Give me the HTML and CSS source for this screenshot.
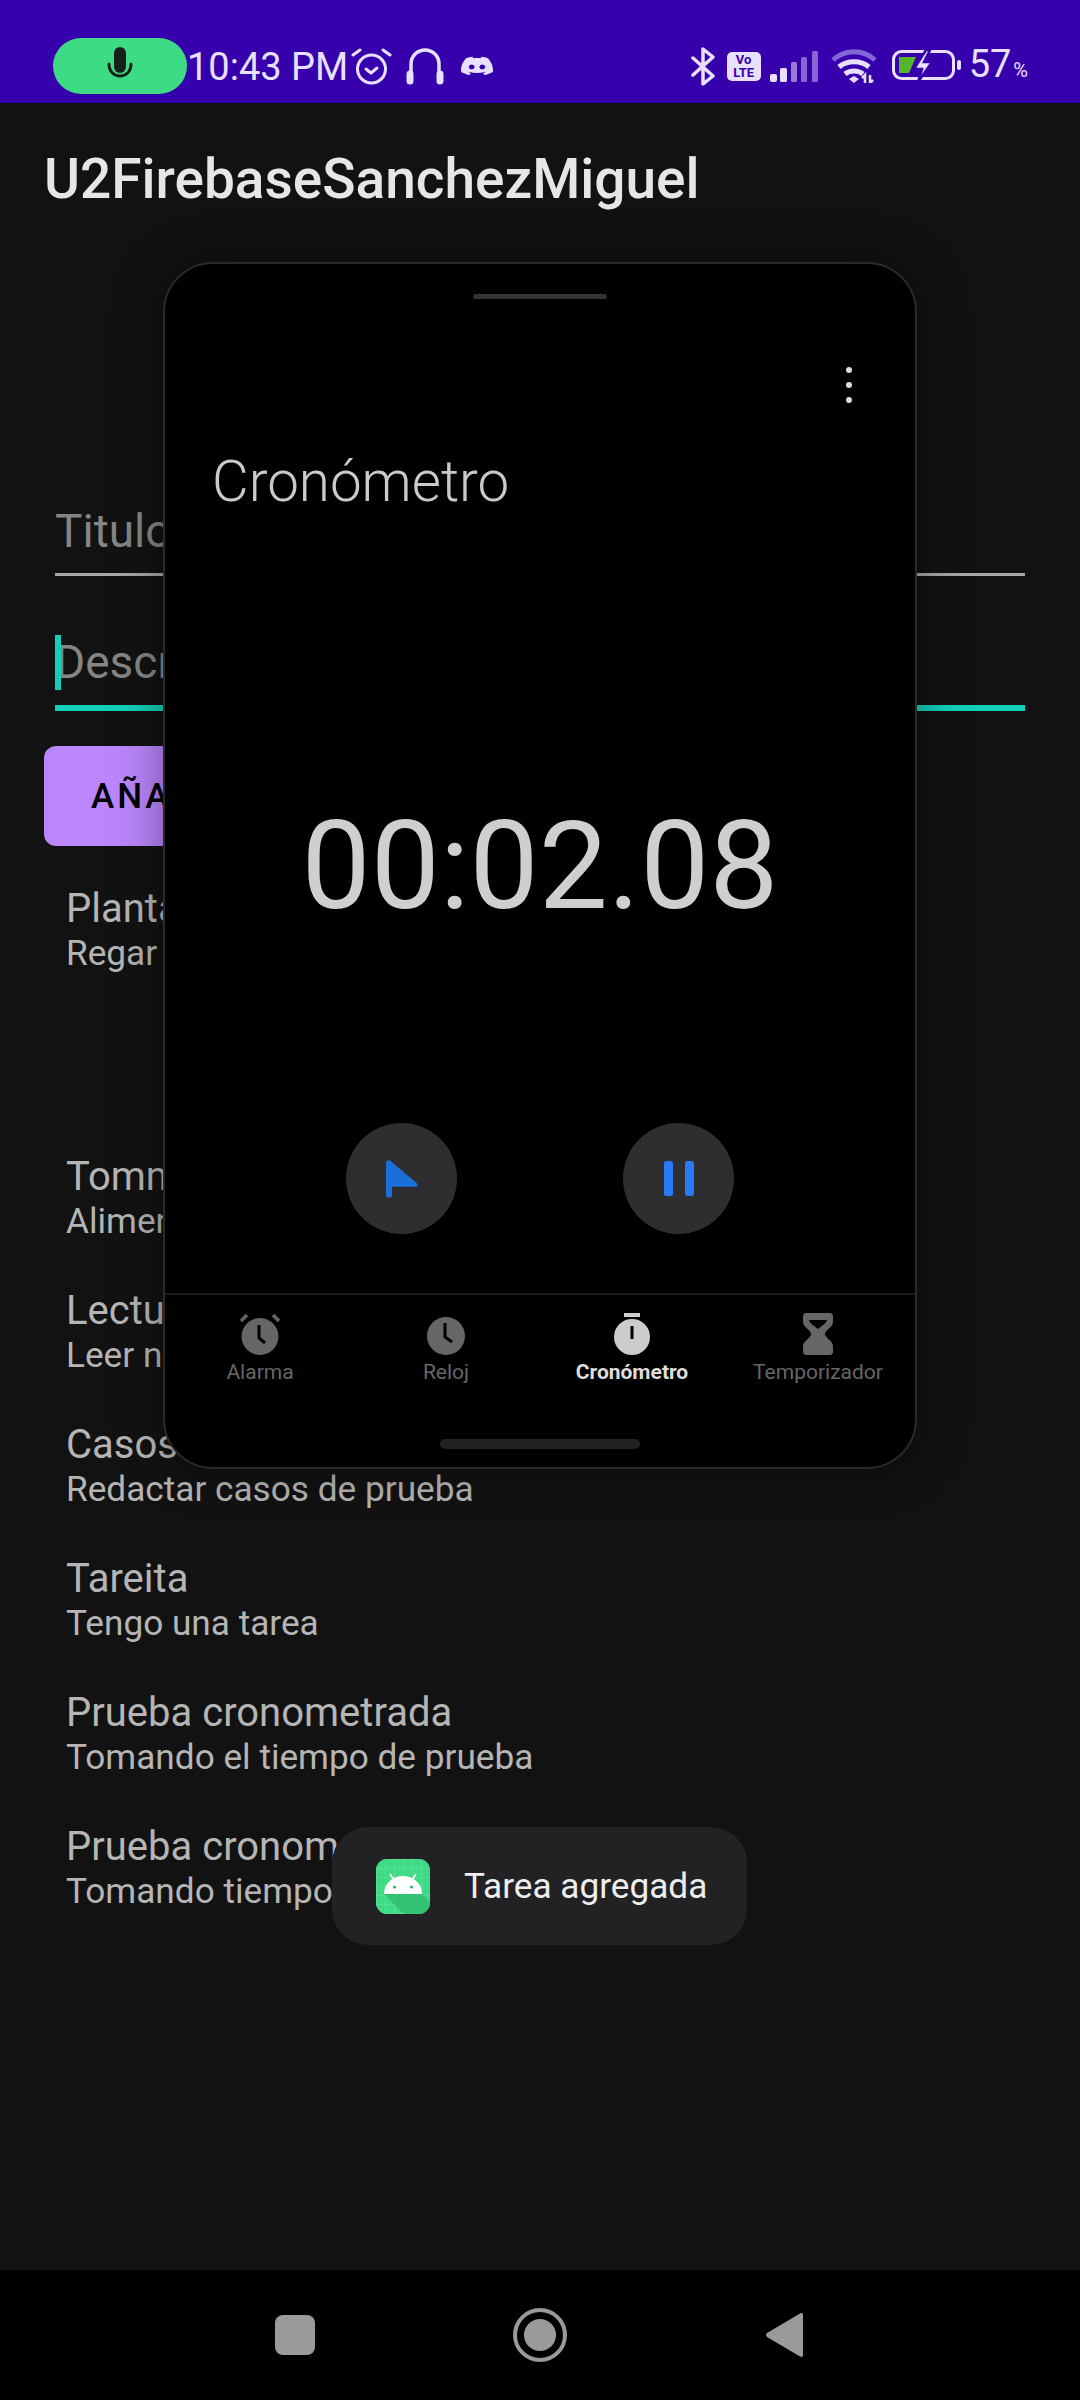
FILE: index.html
```html
<!DOCTYPE html>
<html lang="es">
<head>
    <meta charset="UTF-8">
    <title>U2FirebaseSanchezMiguel</title>
    <link rel="stylesheet" href="styles.css">
</head>
<body>

    <div class="status-bar">
        <div class="mic-pill">
            <svg width="26" height="38" viewBox="0 0 26 38">
                <rect x="7" y="0" width="12" height="26" rx="6" fill="#15201c"/>
                <path d="M2 17c0 16 22 16 22 0" fill="none" stroke="#15201c" stroke-width="3" stroke-linecap="round"/>
            </svg>
        </div>
        <span class="clock">10:43 PM</span>
        <svg class="st-alarm" width="41" height="37" viewBox="0 0 41 37" fill="none" stroke="#e9e0ff" stroke-width="3" stroke-linecap="round" stroke-linejoin="round">
            <circle cx="20.500" cy="21" r="14"/>
            <path d="M15 21l5 4 6-5"/>
            <path d="M2 7l7-5M39 7l-7-5"/>
        </svg>
        <svg class="st-head" width="38" height="37" viewBox="0 0 38 37" fill="none" stroke="#e9e0ff" stroke-linecap="round">
            <path d="M5 28V16a14 14 0 0 1 28 0V28" stroke-width="3.500"/>
            <path d="M4 26v7M34 26v7" stroke-width="7"/>
        </svg>
        <svg class="st-discord" width="32" height="24" viewBox="0 0 24 24" preserveAspectRatio="none">
            <path fill="#e9e0ff" d="M20.317 4.3698a19.7913 19.7913 0 00-4.8851-1.5152.0741.0741 0 00-.0785.0371c-.211.3753-.4447.8648-.6083 1.2495-1.8447-.2762-3.68-.2762-5.4868 0-.1636-.3933-.4058-.8742-.6177-1.2495a.077.077 0 00-.0785-.037 19.7363 19.7363 0 00-4.8852 1.515.0699.0699 0 00-.0321.0277C.5334 9.0458-.319 13.5799.0992 18.0578a.0824.0824 0 00.0312.0561c2.0528 1.5076 4.0413 2.4228 5.9929 3.0294a.0777.0777 0 00.0842-.0276c.4616-.6304.8731-1.2952 1.226-1.9942a.076.076 0 00-.0416-.1057c-.6528-.2476-1.2743-.5495-1.8722-.8923a.077.077 0 01-.0076-.1277c.1258-.0943.2517-.1923.3718-.2914a.0743.0743 0 01.0776-.0105c3.9278 1.7933 8.18 1.7933 12.0614 0a.0739.0739 0 01.0785.0095c.1202.099.246.1981.3728.2924a.077.077 0 01-.0066.1276 12.2986 12.2986 0 01-1.873.8914.0766.0766 0 00-.0407.1067c.3604.698.7719 1.3628 1.225 1.9932a.076.076 0 00.0842.0286c1.961-.6067 3.9495-1.5219 6.0023-3.0294a.077.077 0 00.0313-.0552c.5004-5.177-.8382-9.6739-3.5485-13.6604a.061.061 0 00-.0312-.0286zM8.02 15.3312c-1.1825 0-2.1569-1.0857-2.1569-2.419 0-1.3332.9555-2.4189 2.157-2.4189 1.2108 0 2.1757 1.0952 2.1568 2.419 0 1.3332-.9555 2.4189-2.1569 2.4189zm7.9748 0c-1.1825 0-2.1569-1.0857-2.1569-2.419 0-1.3332.9554-2.4189 2.1569-2.4189 1.2108 0 2.1757 1.0952 2.1568 2.419 0 1.3332-.946 2.4189-2.1568 2.4189Z"/>
        </svg>

        <div class="status-right">
            <svg class="st-bt" width="24" height="39" viewBox="0 0 24 39" fill="none" stroke="#e9e0ff" stroke-width="3.500" stroke-linejoin="round" stroke-linecap="round">
                <path d="M2 11l20 18-10 8V2l10 8L2 28"/>
            </svg>
            <div class="volte"><span>Vo</span><span>LTE</span></div>
            <svg class="st-signal" width="48" height="31" viewBox="0 0 48 31" fill="#e9e0ff">
                <rect x="0" y="23" width="7" height="8" rx="2"/>
                <rect x="10" y="17" width="7" height="14" rx="1.500"/>
                <rect x="21" y="11" width="6" height="20" rx="1.500" opacity=".55"/>
                <rect x="31" y="6" width="6" height="25" rx="1.500" opacity=".45"/>
                <rect x="42" y="0" width="6" height="31" rx="1.500" opacity=".45"/>
            </svg>
            <svg class="st-wifi" width="46" height="34" viewBox="0 0 46 34" fill="none" stroke="#e9e0ff" stroke-width="5">
                <path d="M2 11C14 0 32 0 44 11" stroke="#8467d6"/>
                <path d="M8 18c8-7 22-7 30 0"/>
                <path d="M14 25c5-4 13-4 18 0"/>
                <path d="M18 30l5-3 5 3-5 4z" fill="#e9e0ff" stroke="none"/>
                <path d="M34 34v-8l-3 3M39 26v8l3-3" stroke-width="2.500"/>
            </svg>
            <svg class="st-batt" width="69" height="32" viewBox="0 0 69 32">
                <rect x="1.500" y="1.500" width="60" height="27" rx="8" fill="none" stroke="#e9e0ff" stroke-width="3"/>
                <path d="M7 7h17l-7 16H7z" fill="#55b52a"/>
                <path d="M34 0L22 19h8l-4 13 14-20h-8l6-12z" fill="#e9e0ff" stroke="#3700ad" stroke-width="2.500"/>
                <rect x="65" y="10" width="4" height="10" rx="2" fill="#e9e0ff"/>
            </svg>
            <span class="batt-num">57<small>%</small></span>
        </div>
    </div>

    <div class="app">
        <h1 class="app-title">U2FirebaseSanchezMiguel</h1>

        <div class="campo campo-titulo">Titulo</div>
        <div class="campo campo-foco"><i class="cursor"></i>Descripcion</div>

        <button class="btn-add">AÑADIR</button>

        <ul class="tareas">
            <li class="tarea tarea-alta"><b>Plantas</b><span>Regar plantas</span></li>
            <li class="tarea"><b>Tommy</b><span>Alimentar a Tommy</span></li>
            <li class="tarea"><b>Lectura</b><span>Leer novela</span></li>
            <li class="tarea"><b>Casos de prueba</b><span>Redactar casos de prueba</span></li>
            <li class="tarea"><b>Tareita</b><span>Tengo una tarea</span></li>
            <li class="tarea"><b>Prueba cronometrada</b><span>Tomando el tiempo de prueba</span></li>
            <li class="tarea"><b>Prueba cronometrada</b><span>Tomando tiempo</span></li>
        </ul>
    </div>

    <div class="nav-bar">
        <svg width="40" height="40" viewBox="0 0 40 40"><rect width="40" height="40" rx="8" fill="#9a9a9a"/></svg>
        <svg width="54" height="54" viewBox="0 0 54 54">
            <circle cx="27" cy="27" r="25" fill="none" stroke="#9a9a9a" stroke-width="4"/>
            <circle cx="27" cy="27" r="16" fill="#9a9a9a"/>
        </svg>
        <svg width="37" height="46" viewBox="0 0 37 46"><path d="M34 1.500c1.500-1 3-.2 3 1.500v40c0 1.700-1.500 2.500-3 1.500L1 25c-1.300-1-1.300-3 0-4z" fill="#9a9a9a"/></svg>
    </div>

    <!-- ventana flotante del reloj -->
    <div class="ventana">
        <div class="handle"></div>
        <div class="menu-dots"><i></i><i></i><i></i></div>
        <h2 class="crono-titulo">Cronómetro</h2>
        <div class="crono-tiempo">00:02.08</div>

        <div class="crono-btns">
            <div class="round-btn">
                <svg width="32" height="38" viewBox="0 0 32 38"><path d="M0 3c0-2.500 2.500-3.500 4.500-2l26 22c1.800 1.500 1 3.800-1.200 3.800H6V35c0 3.500-6 3.500-6 0z" fill="#1b6fd8"/></svg>
            </div>
            <div class="round-btn">
                <svg width="30" height="35" viewBox="0 0 30 35" fill="#2979f5"><rect width="9" height="35" rx="2.500"/><rect x="21" width="9" height="35" rx="2.500"/></svg>
            </div>
        </div>

        <div class="tabs">
            <div class="tab">
                <svg width="42" height="42" viewBox="0 0 42 42">
                    <circle cx="21" cy="23.500" r="18.500" fill="#666"/>
                    <path d="M20 12v13l6 5" fill="none" stroke="#000" stroke-width="3"/>
                    <path d="M2 8l6-6M40 8l-6-6" stroke="#666" stroke-width="3.500"/>
                </svg>
                <span>Alarma</span>
            </div>
            <div class="tab">
                <svg width="42" height="42" viewBox="0 0 42 42">
                    <circle cx="21" cy="23" r="19" fill="#666"/>
                    <path d="M20 10v14l7 5" fill="none" stroke="#000" stroke-width="3"/>
                </svg>
                <span>Reloj</span>
            </div>
            <div class="tab activa">
                <svg width="42" height="42" viewBox="0 0 42 42">
                    <rect x="13" y="0" width="16" height="4" fill="#ccc"/>
                    <circle cx="21" cy="24" r="18" fill="#ccc"/>
                    <rect x="19.500" y="13" width="3" height="13" fill="#000"/>
                </svg>
                <span>Cronómetro</span>
            </div>
            <div class="tab">
                <svg width="42" height="42" viewBox="0 0 42 42">
                    <path d="M6 3c0-1.500 1.500-3 3-3h24c1.500 0 3 1.500 3 3v6c0 5-8 8-8 12s8 7 8 12v6c0 1.500-1.500 3-3 3H9c-1.500 0-3-1.500-3-3v-6c0-5 8-8 8-12S6 14 6 9z" fill="#666"/>
                    <path d="M12 7h18c-1 4-6 6-9 9-3-3-8-5-9-9z" fill="#000"/>
                </svg>
                <span>Temporizador</span>
            </div>
        </div>
        <div class="handle-bottom"></div>
    </div>

    <div class="toast">
        <svg width="54" height="55" viewBox="0 0 54 55">
            <defs>
                <pattern id="rejilla" width="9" height="9" patternUnits="userSpaceOnUse">
                    <path d="M9 0H0V9" fill="none" stroke="#7fe0ad" stroke-width=".7"/>
                </pattern>
            </defs>
            <rect width="54" height="55" rx="11" fill="#3ddc84"/>
            <rect width="54" height="55" rx="11" fill="url(#rejilla)"/>
            <path d="M8 35h38l8 8v1c0 6-5 11-11 11H28z" fill="#2fb56d" opacity=".7"/>
            <path d="M8 35c0-11 9-18 19-18s19 7 19 18z" fill="#fff"/>
            <path d="M18 21l-4-6M36 21l4-6" stroke="#fff" stroke-width="1.500"/>
            <circle cx="18.500" cy="28" r="1.600" fill="#2fb56d"/>
            <circle cx="35.500" cy="28" r="1.600" fill="#2fb56d"/>
        </svg>
        <span>Tarea agregada</span>
    </div>

</body>
</html>
```

FILE: styles.css
```css
* {
    box-sizing: border-box;
}

body {
    margin: 0;
    width: 1080px;
    height: 2400px;
    position: relative;
    overflow: hidden;
    display: flex;
    flex-direction: column;
    background-color: #121212;
    font-family: Roboto, "Liberation Sans", sans-serif;
}

/* barra de estado */
.status-bar {
    height: 103px;
    flex: none;
    display: flex;
    align-items: center;
    padding: 29px 0 0 53px;
    background-color: #3700ad;
    color: #e9e0ff;
}

.mic-pill {
    width: 134px;
    height: 56px;
    border-radius: 28px;
    background-color: #3ddc84;
    display: flex;
    align-items: center;
    justify-content: center;
}

.clock {
    margin: 2px 0 0;
    font-size: 38px;
    line-height: 56px;
}

.st-alarm {
    margin-left: 3px;
}

.st-head {
    margin-left: 14px;
}

.st-discord {
    margin-left: 17px;
}

.status-right {
    margin-left: auto;
    display: flex;
    align-items: center;
    padding-right: 52px;
}

.volte {
    width: 34px;
    height: 29px;
    margin-left: 12px;
    border-radius: 5px;
    background-color: #e9e0ff;
    color: #3700ad;
    display: flex;
    flex-direction: column;
    align-items: center;
    justify-content: center;
    font-size: 13px;
    line-height: 13px;
    font-weight: 700;
}

.st-signal {
    margin-left: 9px;
}

.st-wifi {
    margin-left: 13px;
}

.st-batt {
    margin-left: 15px;
}

.batt-num {
    margin: 2px 0 0 8px;
    font-size: 38px;
    line-height: 56px;
}

.batt-num small {
    font-size: 20px;
    margin-left: 2px;
}

/* contenido de la app */
.app {
    flex: 1;
    padding: 0 44px;
}

.app-title {
    margin: 47px 0 0;
    font-size: 55px;
    line-height: 58px;
    font-weight: 500;
    color: #e6e6e6;
}

.campo {
    position: relative;
    margin: 0 11px;
    height: 72px;
    font-size: 46px;
    color: #858585;
    border-bottom: 3px solid #a8a8a8;
}

.campo-titulo {
    margin-top: 296px;
    line-height: 54px;
}

.campo-foco {
    margin-top: 63px;
    line-height: 46px;
    border-bottom: 6px solid #12d0b8;
}

.cursor {
    position: absolute;
    left: 0;
    top: -4px;
    width: 6px;
    height: 55px;
    background-color: #12d0b8;
}

.btn-add {
    display: block;
    margin-top: 35px;
    padding: 0 47px;
    height: 100px;
    border: none;
    border-radius: 12px;
    background-color: #bb86fc;
    color: #000;
    font-family: inherit;
    font-size: 35px;
    font-weight: 500;
    letter-spacing: 3px;
}

.tareas {
    list-style: none;
    margin: 41px 0 0;
    padding: 0 22px;
}

.tarea {
    height: 134px;
    display: flex;
    flex-direction: column;
    color: #b5b5b5;
}

.tarea-alta {
    height: 268px;
}

.tarea b {
    font-weight: 400;
    font-size: 40px;
    line-height: 44px;
}

.tarea span {
    font-size: 35.200px;
    line-height: 44px;
}

/* barra de navegacion */
.nav-bar {
    height: 130px;
    flex: none;
    display: flex;
    align-items: center;
    background-color: #000;
    padding-left: 275px;
}

.nav-bar svg:nth-child(2) {
    margin-left: 198px;
}

.nav-bar svg:nth-child(3) {
    margin-left: 199px;
}

/* ventana flotante */
.ventana {
    position: absolute;
    left: 163px;
    top: 262px;
    width: 754px;
    height: 1207px;
    border: 2px solid #2a2a2a;
    border-radius: 50px;
    background-color: #000;
    box-shadow: 0 0 50px rgba(0, 0, 0, 0.4);
    display: flex;
    flex-direction: column;
}

.handle {
    width: 134px;
    height: 5px;
    margin: 30px auto 0;
    border-radius: 3px;
    background-color: #333;
}

.menu-dots {
    align-self: flex-end;
    margin: 68px 63px 0 0;
    display: flex;
    flex-direction: column;
    gap: 9px;
}

.menu-dots i {
    width: 6px;
    height: 6px;
    border-radius: 50%;
    background-color: #ddd;
}

.crono-titulo {
    margin: 47px 0 0 47px;
    font-size: 56.500px;
    line-height: 64px;
    font-weight: 300;
    color: #cacaca;
}

.crono-tiempo {
    margin-top: 282px;
    text-align: center;
    font-size: 123px;
    line-height: 140px;
    color: #cfcfcf;
}

.crono-btns {
    display: flex;
    justify-content: center;
    gap: 166px;
    margin-top: 187px;
}

.round-btn {
    width: 111px;
    height: 111px;
    border-radius: 50%;
    background-color: #2e2e30;
    display: flex;
    align-items: center;
    justify-content: center;
}

.tabs {
    display: grid;
    grid-template-columns: repeat(4, 1fr);
    margin-top: 59px;
    padding: 18px 4px 0 2px;
    border-top: 2px solid #1a1a1a;
}

.tab {
    display: flex;
    flex-direction: column;
    align-items: center;
    gap: 3px;
    color: #666;
    font-size: 21px;
    line-height: 28px;
}

.tab.activa {
    color: #ddd;
    font-weight: 700;
}

.handle-bottom {
    width: 200px;
    height: 10px;
    margin: 53px auto 0;
    border-radius: 5px;
    background-color: #222;
}

/* aviso */
.toast {
    position: absolute;
    left: 332px;
    top: 1827px;
    width: 415px;
    height: 118px;
    border-radius: 36px;
    background-color: #222224;
    display: flex;
    align-items: center;
    padding-left: 44px;
    color: #eee;
    font-size: 35.200px;
}

.toast span {
    margin-left: 34px;
}
```
